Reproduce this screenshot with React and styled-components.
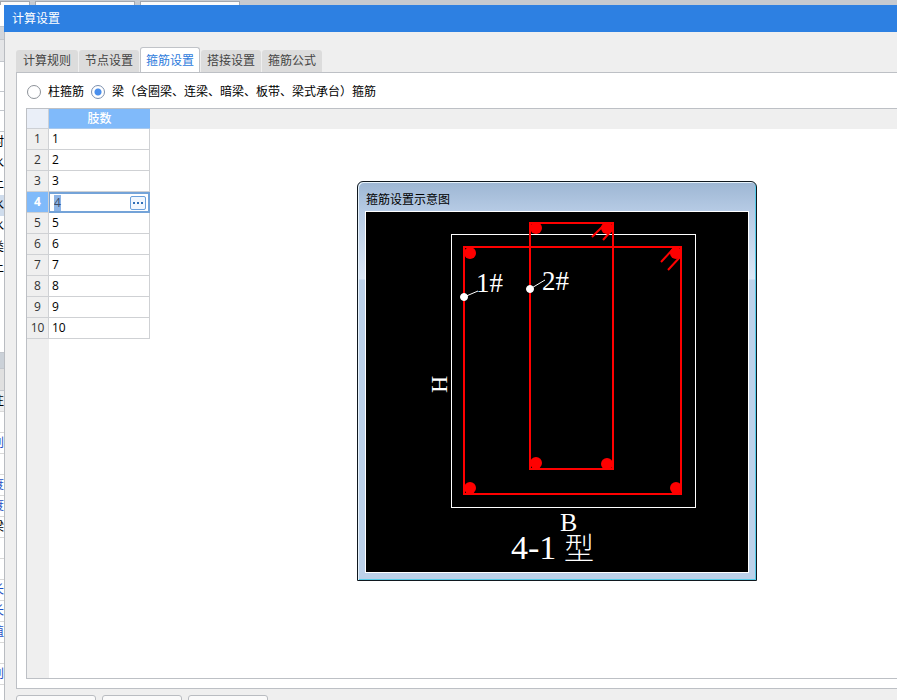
import React, { useState } from "react";
import styled, { createGlobalStyle, css } from "styled-components";

const GlobalStyle = createGlobalStyle`
  * { box-sizing: border-box; }
  html, body, #root { height: 100%; }
  body {
    margin: 0;
    overflow: hidden;
    background: #fff;
    color: #000;
    font: 12px/16px "Open Sans", "Noto Sans CJK SC", sans-serif;
  }
  button, input { font: inherit; color: inherit; }
`;

const Desktop = styled.div`
  height: 100%;
  display: grid;
  grid-template: 5px minmax(0, 1fr) / 4px minmax(0, 1fr);
`;

const DocumentTabs = styled.div`
  grid-column: 1 / -1;
  display: flex;
  gap: 5px;
  background: #c6cad0;
`;

const DocumentTab = styled.div`
  width: ${(p) => p.$width}px;
  margin-top: 1px;
  background: #fbfbfb;
  border: 1px solid #a3a8af;
  border-width: 1px 1px 0;
`;

const SideStrip = styled.div`
  overflow: hidden;
`;

const SideBand = styled.div`
  height: ${(p) => p.$height}px;
  background: ${(p) => p.$color};
  border-bottom: 1px solid #c3c7cd;
`;

const SideRow = styled.div`
  height: 21px;
  display: flex;
  justify-content: flex-end;
  align-items: center;
  overflow: hidden;
  white-space: nowrap;
  border-bottom: 1px solid ${(p) => (p.$ruled ? "#d9d9d9" : "transparent")};
  background: ${(p) => p.$bg || "#fff"};
  color: ${(p) => (p.$blue ? "#1f4fc4" : "#000")};
`;

const Dialog = styled.main`
  min-width: 0;
  display: flex;
  flex-direction: column;
  background: #efefef;
  border-left: 1px solid #b9bcc1;
`;

const TitleBar = styled.header`
  flex: none;
  height: 27px;
  margin-left: -1px;
  padding: 0 8px;
  display: flex;
  align-items: center;
  background: #2d80e2;
  color: #fff;
`;

const Title = styled.h1`
  margin: 0;
  font-size: 12px;
  font-weight: 400;
`;

const TabList = styled.div`
  flex: none;
  height: 40px;
  padding-left: 11px;
  display: flex;
  align-items: flex-end;
  gap: 1px;
`;

const Tab = styled.button`
  height: 22px;
  width: 60px;
  padding: 0;
  border: 0;
  border-radius: 3px 3px 0 0;
  background: #dcdcdc;
  color: #444;
  white-space: nowrap;
  &:first-child { width: 62px; }
  ${(p) =>
    p.$active &&
    css`
      height: 26px;
      margin-bottom: -1px;
      background: #fff;
      border: 1px solid #c0c3c8;
      border-bottom: 0;
      color: #2d7bdc;
    `}
`;

const Panel = styled.section`
  flex: 1;
  min-height: 0;
  margin-left: 11px;
  padding: 11px 0 9px 9px;
  display: flex;
  flex-direction: column;
  background: #fff;
  border: 1px solid #bdc0c5;
  border-right: 0;
`;

const RadioRow = styled.div`
  height: 16px;
  margin-bottom: 8px;
  padding-left: 1px;
  display: flex;
  align-items: center;
  gap: 7px;
`;

const RadioLabel = styled.label`
  display: flex;
  align-items: center;
  gap: 7px;
  white-space: nowrap;
`;

const Radio = styled.input`
  appearance: none;
  width: 14px;
  height: 14px;
  margin: 0;
  border: 1px solid #8d9299;
  border-radius: 50%;
  background: #fff;
  &:checked {
    border-color: #7b8fae;
    background: radial-gradient(circle, #4a8fec 3px, #fff 4px);
  }
`;

const GridArea = styled.div`
  flex: 1;
  min-height: 0;
  border: 1px solid #bdc0c5;
  border-right: 0;
  background:
    linear-gradient(#efefef, #efefef) 0 0 / 100% 20px no-repeat,
    linear-gradient(#efefef, #efefef) 0 0 / 22px 100% no-repeat,
    #fff;
`;

const Table = styled.table`
  width: 123px;
  table-layout: fixed;
  border-collapse: separate;
  border-spacing: 0;
`;

const Corner = styled.td`
  width: 22px;
  height: 20px;
  padding: 0;
  background: #eaeff8;
  border: 1px solid #cdd0d5;
  border-width: 0 1px 1px 0;
`;

const ColumnHead = styled.th`
  height: 20px;
  padding: 0;
  line-height: 18px;
  background: #80bafa;
  border-bottom: 1px solid #a8c9ee;
  color: #fff;
  font-weight: 500;
`;

const RowHead = styled.th`
  height: 21px;
  padding: 0;
  font-weight: ${(p) => (p.$active ? 700 : 400)};
  color: ${(p) => (p.$active ? "#fff" : "#333")};
  background: ${(p) => (p.$active ? "#80bafa" : "#efefef")};
  border: 1px solid #cfd1d4;
  border-width: 0 1px 1px 0;
`;

const Cell = styled.td`
  height: 21px;
  padding: 0 0 0 3px;
  border: 1px solid #cfd1d4;
  border-width: 0 1px 1px 0;
`;

const EditCell = styled.td`
  height: 21px;
  padding: 0;
`;

const Editor = styled.div`
  height: 21px;
  padding: 0 2px 0 4px;
  display: flex;
  align-items: center;
  background: #fff;
  border: 2px solid #74a3d8;
  border-left-width: 1px;
`;

const EditInput = styled.input`
  flex: 1;
  min-width: 0;
  height: 16px;
  padding: 0;
  border: 0;
  outline: 0;
  background: transparent;
  color: #3c4c66;
  &::selection {
    background: #8db4e6;
    color: #3c4c66;
  }
`;

const MoreButton = styled.button`
  width: 16px;
  height: 14px;
  padding: 0;
  display: grid;
  place-items: center;
  border: 1px solid #6aa0dc;
  border-radius: 2px;
  background: #f1f7fe;
  color: #2f6fb8;
`;

const Footer = styled.footer`
  flex: none;
  height: 11px;
  padding: 6px 0 0 11px;
  display: flex;
  gap: 6px;
  overflow: hidden;
`;

const FooterButton = styled.button`
  width: 80px;
  height: 24px;
  border: 1px solid #b9bcc1;
  border-radius: 3px;
  background: #fafafa;
`;

const PreviewWindow = styled.aside`
  position: absolute;
  left: 357px;
  top: 181px;
  padding: 1px 7px 7px;
  border: 1px solid #10181f;
  border-radius: 6px 6px 0 0;
  background: linear-gradient(#9db6d3, #b5cae4 28px, #dbe6f5 97px, #bcd1e9 98px);
  box-shadow: inset 1px 1px 0 #e6f2fb, inset -1px -1px 0 #55cbe8;
`;

const PreviewTitle = styled.h2`
  height: 28px;
  margin: 0;
  padding: 9px 0 0 1px;
  font-size: 12px;
  line-height: 16px;
  font-weight: 400;
`;

const Drawing = styled.svg`
  display: block;
  border: 1px solid #fff;
  background: #000;
  text {
    fill: #fff;
    font-family: "Liberation Serif", "Noto Sans CJK SC", serif;
  }
`;

const tabs = ["计算规则", "节点设置", "箍筋设置", "搭接设置", "箍筋公式"];

const upperRows = ["村", "水", "上", "水", "水", "类", "上", "", "", ""];
const lowerRows = [
  ["注", false], ["", false], ["别", true], ["", false], ["度", true],
  ["度", true], ["梁", false], ["", false], ["", false], ["长", true],
  ["长", true], ["值", true], ["", false], ["别", true],
];

function StirrupDrawing() {
  const bars = [
    [104, 41], [310, 41], [104, 276], [310, 276],
    [170, 16], [241, 16], [170, 251], [241, 252],
  ];
  return (
    <Drawing width="384" height="362" viewBox="0 0 382 360" role="img" aria-label="4-1型箍筋">
      <rect x="85.5" y="22.5" width="244" height="273" fill="none" stroke="#fff" />
      <g fill="none" stroke="#f00" strokeWidth="2">
        <rect x="98" y="35" width="217" height="247" />
        <rect x="164" y="11" width="83" height="246" />
        <path d="M238 13l-12 12M246 18l-9 10M308 36l-13 14M314 45l-12 13" />
      </g>
      <g fill="#f00">
        {bars.map(([x, y]) => (
          <circle key={`${x}-${y}`} cx={x} cy={y} r="6" />
        ))}
      </g>
      <g stroke="#fff" fill="#fff">
        <path d="M98 85l14-6M164 77l15-9" />
        <circle cx="98" cy="85" r="3.5" />
        <circle cx="164" cy="77" r="3.5" />
      </g>
      <text x="110" y="80" fontSize="27">1#</text>
      <text x="176" y="78" fontSize="27">2#</text>
      <text transform="translate(81 181) rotate(-90)" fontSize="24">H</text>
      <text x="194" y="319" fontSize="26">B</text>
      <text x="145" y="347" fontSize="34">4-1</text>
      <text x="198" y="347" fontSize="30" fontWeight="300">型</text>
    </Drawing>
  );
}

export default function App() {
  const [active, setActive] = useState(2);
  const [kind, setKind] = useState("beam");
  const [value, setValue] = useState("4");

  return (
    <>
      <GlobalStyle />
      <Desktop>
        <DocumentTabs>
          <DocumentTab $width={30} />
          <DocumentTab $width={100} />
          <DocumentTab $width={100} />
        </DocumentTabs>
        <SideStrip>
          <SideBand $height={22} $color="#fff" />
          <SideBand $height={13} $color="#d2d6dc" />
          <SideBand $height={22} $color="#e4e5e7" />
          <SideBand $height={30} $color="#fff" />
          <SideBand $height={19} $color="#fff" />
          <SideBand $height={21} $color="#fff" />
          {upperRows.map((text, i) => (
            <SideRow key={i} $bg={i === 3 ? "#cfdcec" : "#fff"}>{text}</SideRow>
          ))}
          <SideBand $height={11} $color="#fff" />
          <SideBand $height={16} $color="#cbd1d8" />
          <SideBand $height={22} $color="#e0e0e0" />
          {lowerRows.map(([text, blue], i) => (
            <SideRow key={i} $ruled $blue={blue} $bg={i === 0 ? "#efefef" : "#fff"}>{text}</SideRow>
          ))}
        </SideStrip>
        <Dialog>
          <TitleBar>
            <Title>计算设置</Title>
          </TitleBar>
          <TabList role="tablist">
            {tabs.map((name, i) => (
              <Tab
                key={name}
                role="tab"
                aria-selected={i === active}
                $active={i === active}
                onClick={() => setActive(i)}
              >
                {name}
              </Tab>
            ))}
          </TabList>
          <Panel>
            <RadioRow>
              <RadioLabel>
                <Radio type="radio" name="kind" checked={kind === "column"} onChange={() => setKind("column")} />
                柱箍筋
              </RadioLabel>
              <RadioLabel>
                <Radio type="radio" name="kind" checked={kind === "beam"} onChange={() => setKind("beam")} />
                梁（含圈梁、连梁、暗梁、板带、梁式承台）箍筋
              </RadioLabel>
            </RadioRow>
            <GridArea>
              <Table>
                <thead>
                  <tr>
                    <Corner />
                    <ColumnHead scope="col">肢数</ColumnHead>
                  </tr>
                </thead>
                <tbody>
                  {Array.from({ length: 10 }, (_, i) => i + 1).map((n) => (
                    <tr key={n}>
                      <RowHead scope="row" $active={n === 4}>{n}</RowHead>
                      {n === 4 ? (
                        <EditCell>
                          <Editor>
                            <EditInput
                              autoFocus
                              aria-label="肢数"
                              value={value}
                              onFocus={(e) => e.target.select()}
                              onChange={(e) => setValue(e.target.value)}
                            />
                            <MoreButton aria-label="更多">
                              <svg width="10" height="2" fill="currentColor" aria-hidden="true">
                                <path d="M0 0h2v2H0zM4 0h2v2H4zM8 0h2v2H8z" />
                              </svg>
                            </MoreButton>
                          </Editor>
                        </EditCell>
                      ) : (
                        <Cell>{n}</Cell>
                      )}
                    </tr>
                  ))}
                </tbody>
              </Table>
            </GridArea>
          </Panel>
          <Footer>
            <FooterButton aria-label="导入规则" />
            <FooterButton aria-label="导出规则" />
            <FooterButton aria-label="恢复" />
          </Footer>
        </Dialog>
      </Desktop>
      <PreviewWindow>
        <PreviewTitle>箍筋设置示意图</PreviewTitle>
        <StirrupDrawing />
      </PreviewWindow>
    </>
  );
}
